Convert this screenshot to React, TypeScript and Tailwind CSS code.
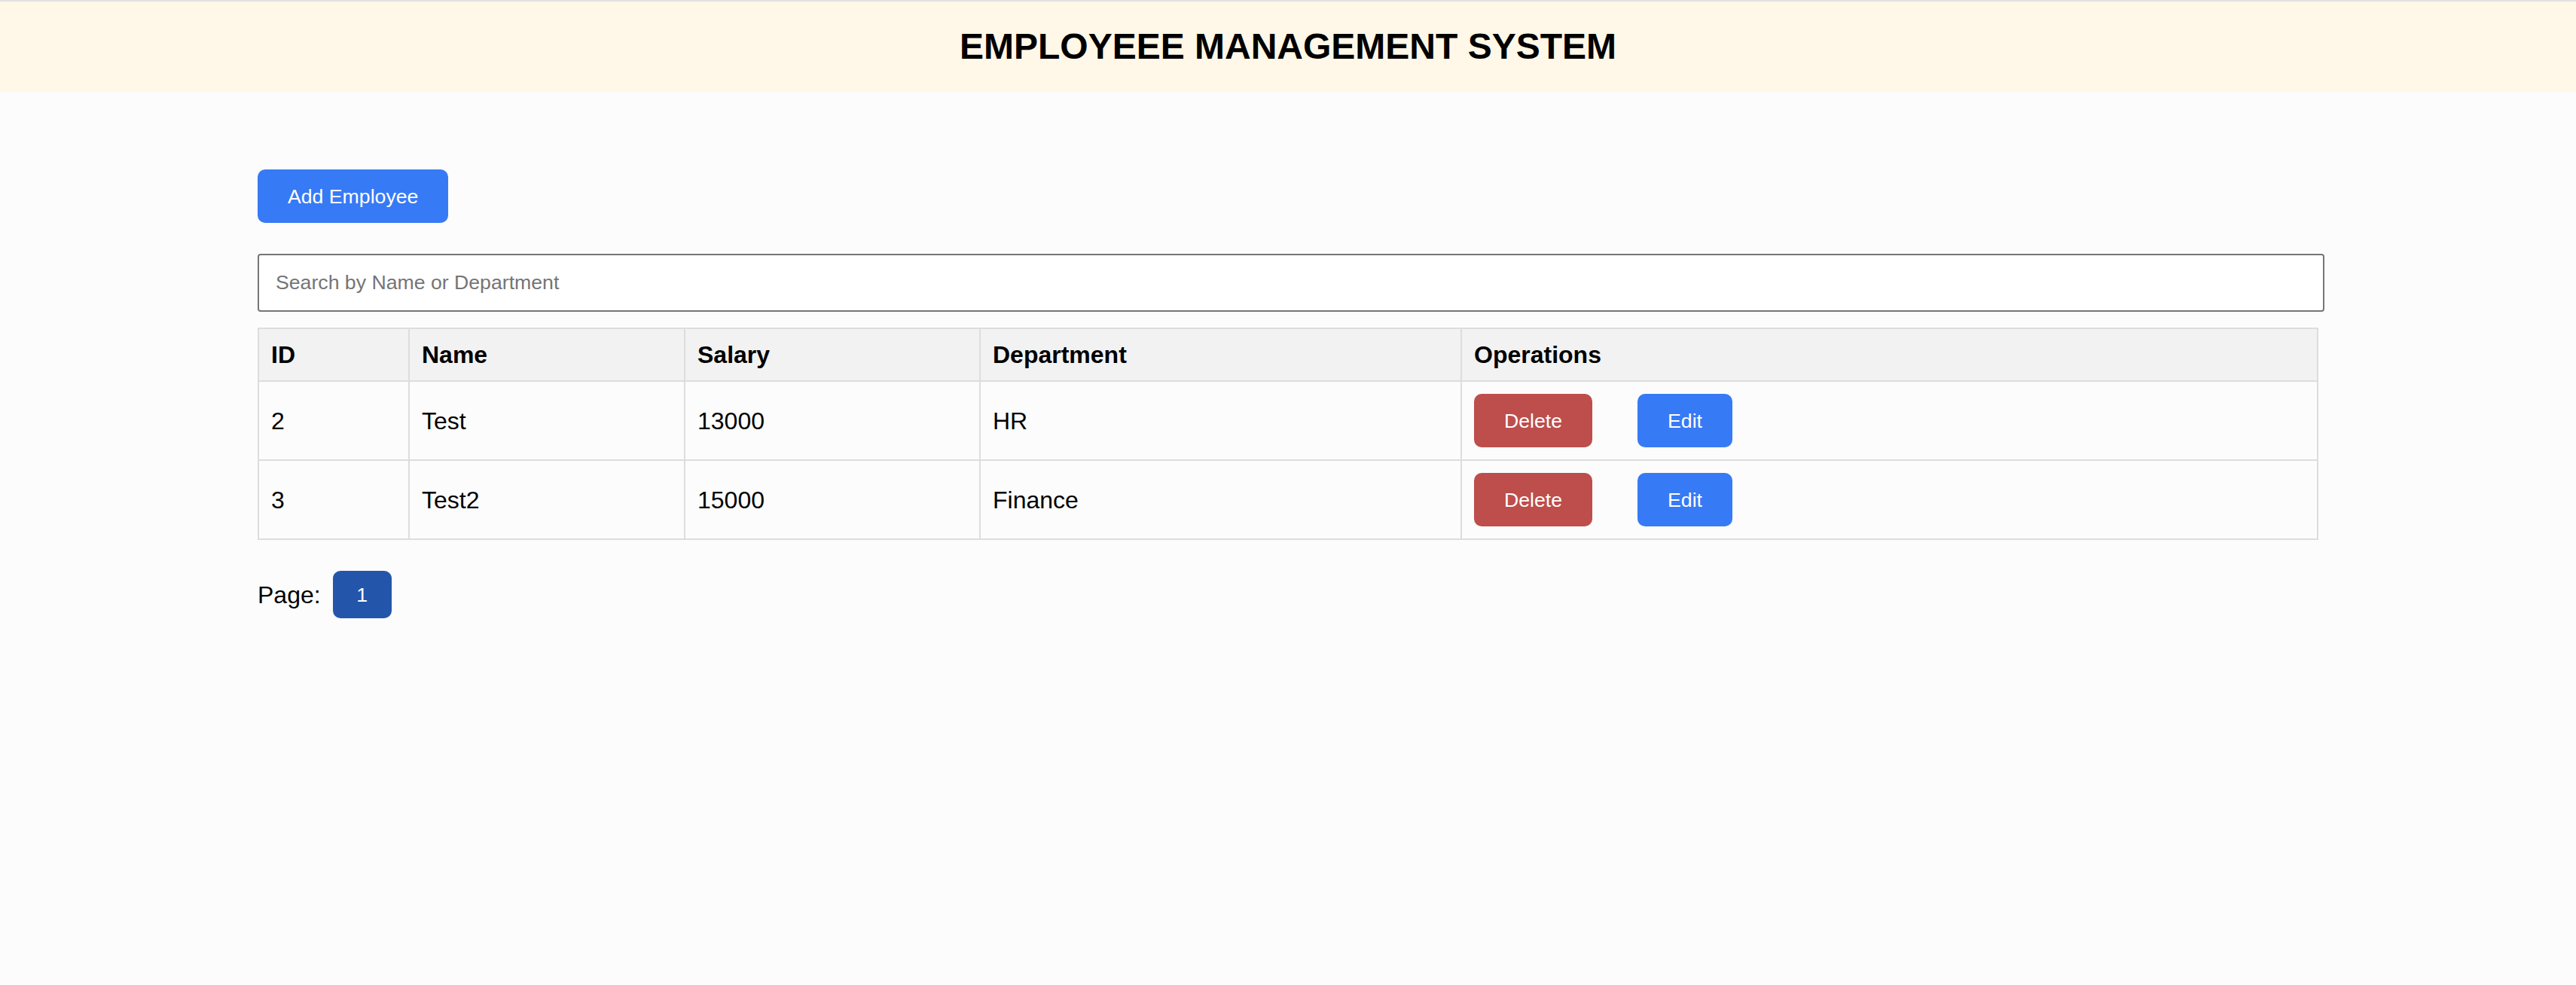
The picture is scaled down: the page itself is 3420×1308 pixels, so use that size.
const EMPLOYEES = [
  { id: 2, name: 'Test', salary: 13000, department: 'HR' },
  { id: 3, name: 'Test2', salary: 15000, department: 'Finance' },
]

const cell = 'border-2 border-[#dddddd] px-[16px] py-[16px] text-left align-middle'

export default function App() {
  return (
    <div className="min-h-screen bg-[#fcfcfc] text-black font-['Liberation_Sans',Arial,sans-serif] border-t-2 border-[#e1e1e1]">
      {/* Header */}
      <header className="h-[120px] bg-[#fff7e7] flex items-center justify-center">
        <h1 className="text-[48px] font-bold leading-none">EMPLOYEEE MANAGEMENT SYSTEM</h1>
      </header>

      {/* Main */}
      <main className="w-[80%] mx-auto pt-[103px] flex flex-col items-start">
        <button className="h-[71px] px-[40px] rounded-[10px] bg-[#377af5] text-white text-[26.67px]">
          Add Employee
        </button>

        <input
          type="text"
          placeholder="Search by Name or Department"
          className="mt-[41px] w-[calc(100%+8px)] h-[77px] px-[22px] bg-white border-2 border-[#767676] rounded-[4px] text-[26.67px] placeholder:text-[#757575] outline-none"
        />

        <table className="mt-[21px] w-full table-fixed border-collapse text-[32px]">
          <colgroup>
            <col className="w-[200px]" />
            <col className="w-[366px]" />
            <col className="w-[392px]" />
            <col className="w-[639px]" />
            <col />
          </colgroup>
          <thead>
            <tr className="bg-[#f2f2f2]">
              {['ID', 'Name', 'Salary', 'Department', 'Operations'].map((h) => (
                <th key={h} className={`${cell} font-bold leading-[36px]`}>{h}</th>
              ))}
            </tr>
          </thead>
          <tbody>
            {EMPLOYEES.map((e) => (
              <tr key={e.id}>
                <td className={cell}>{e.id}</td>
                <td className={cell}>{e.name}</td>
                <td className={cell}>{e.salary}</td>
                <td className={cell}>{e.department}</td>
                <td className={cell}>
                  <div className="flex items-center gap-[60px]">
                    <button className="h-[71px] px-[40px] rounded-[10px] bg-[#bd4e4b] text-white text-[26.67px]">
                      Delete
                    </button>
                    <button className="h-[71px] px-[40px] rounded-[10px] bg-[#377af5] text-white text-[26.67px]">
                      Edit
                    </button>
                  </div>
                </td>
              </tr>
            ))}
          </tbody>
        </table>

        {/* Pagination */}
        <div className="mt-[41px] flex items-center gap-[16px]">
          <span className="text-[32px]">Page:</span>
          <button className="h-[63px] w-[78px] rounded-[10px] bg-[#2356ab] text-white text-[26.67px]">
            1
          </button>
        </div>
      </main>
    </div>
  )
}
